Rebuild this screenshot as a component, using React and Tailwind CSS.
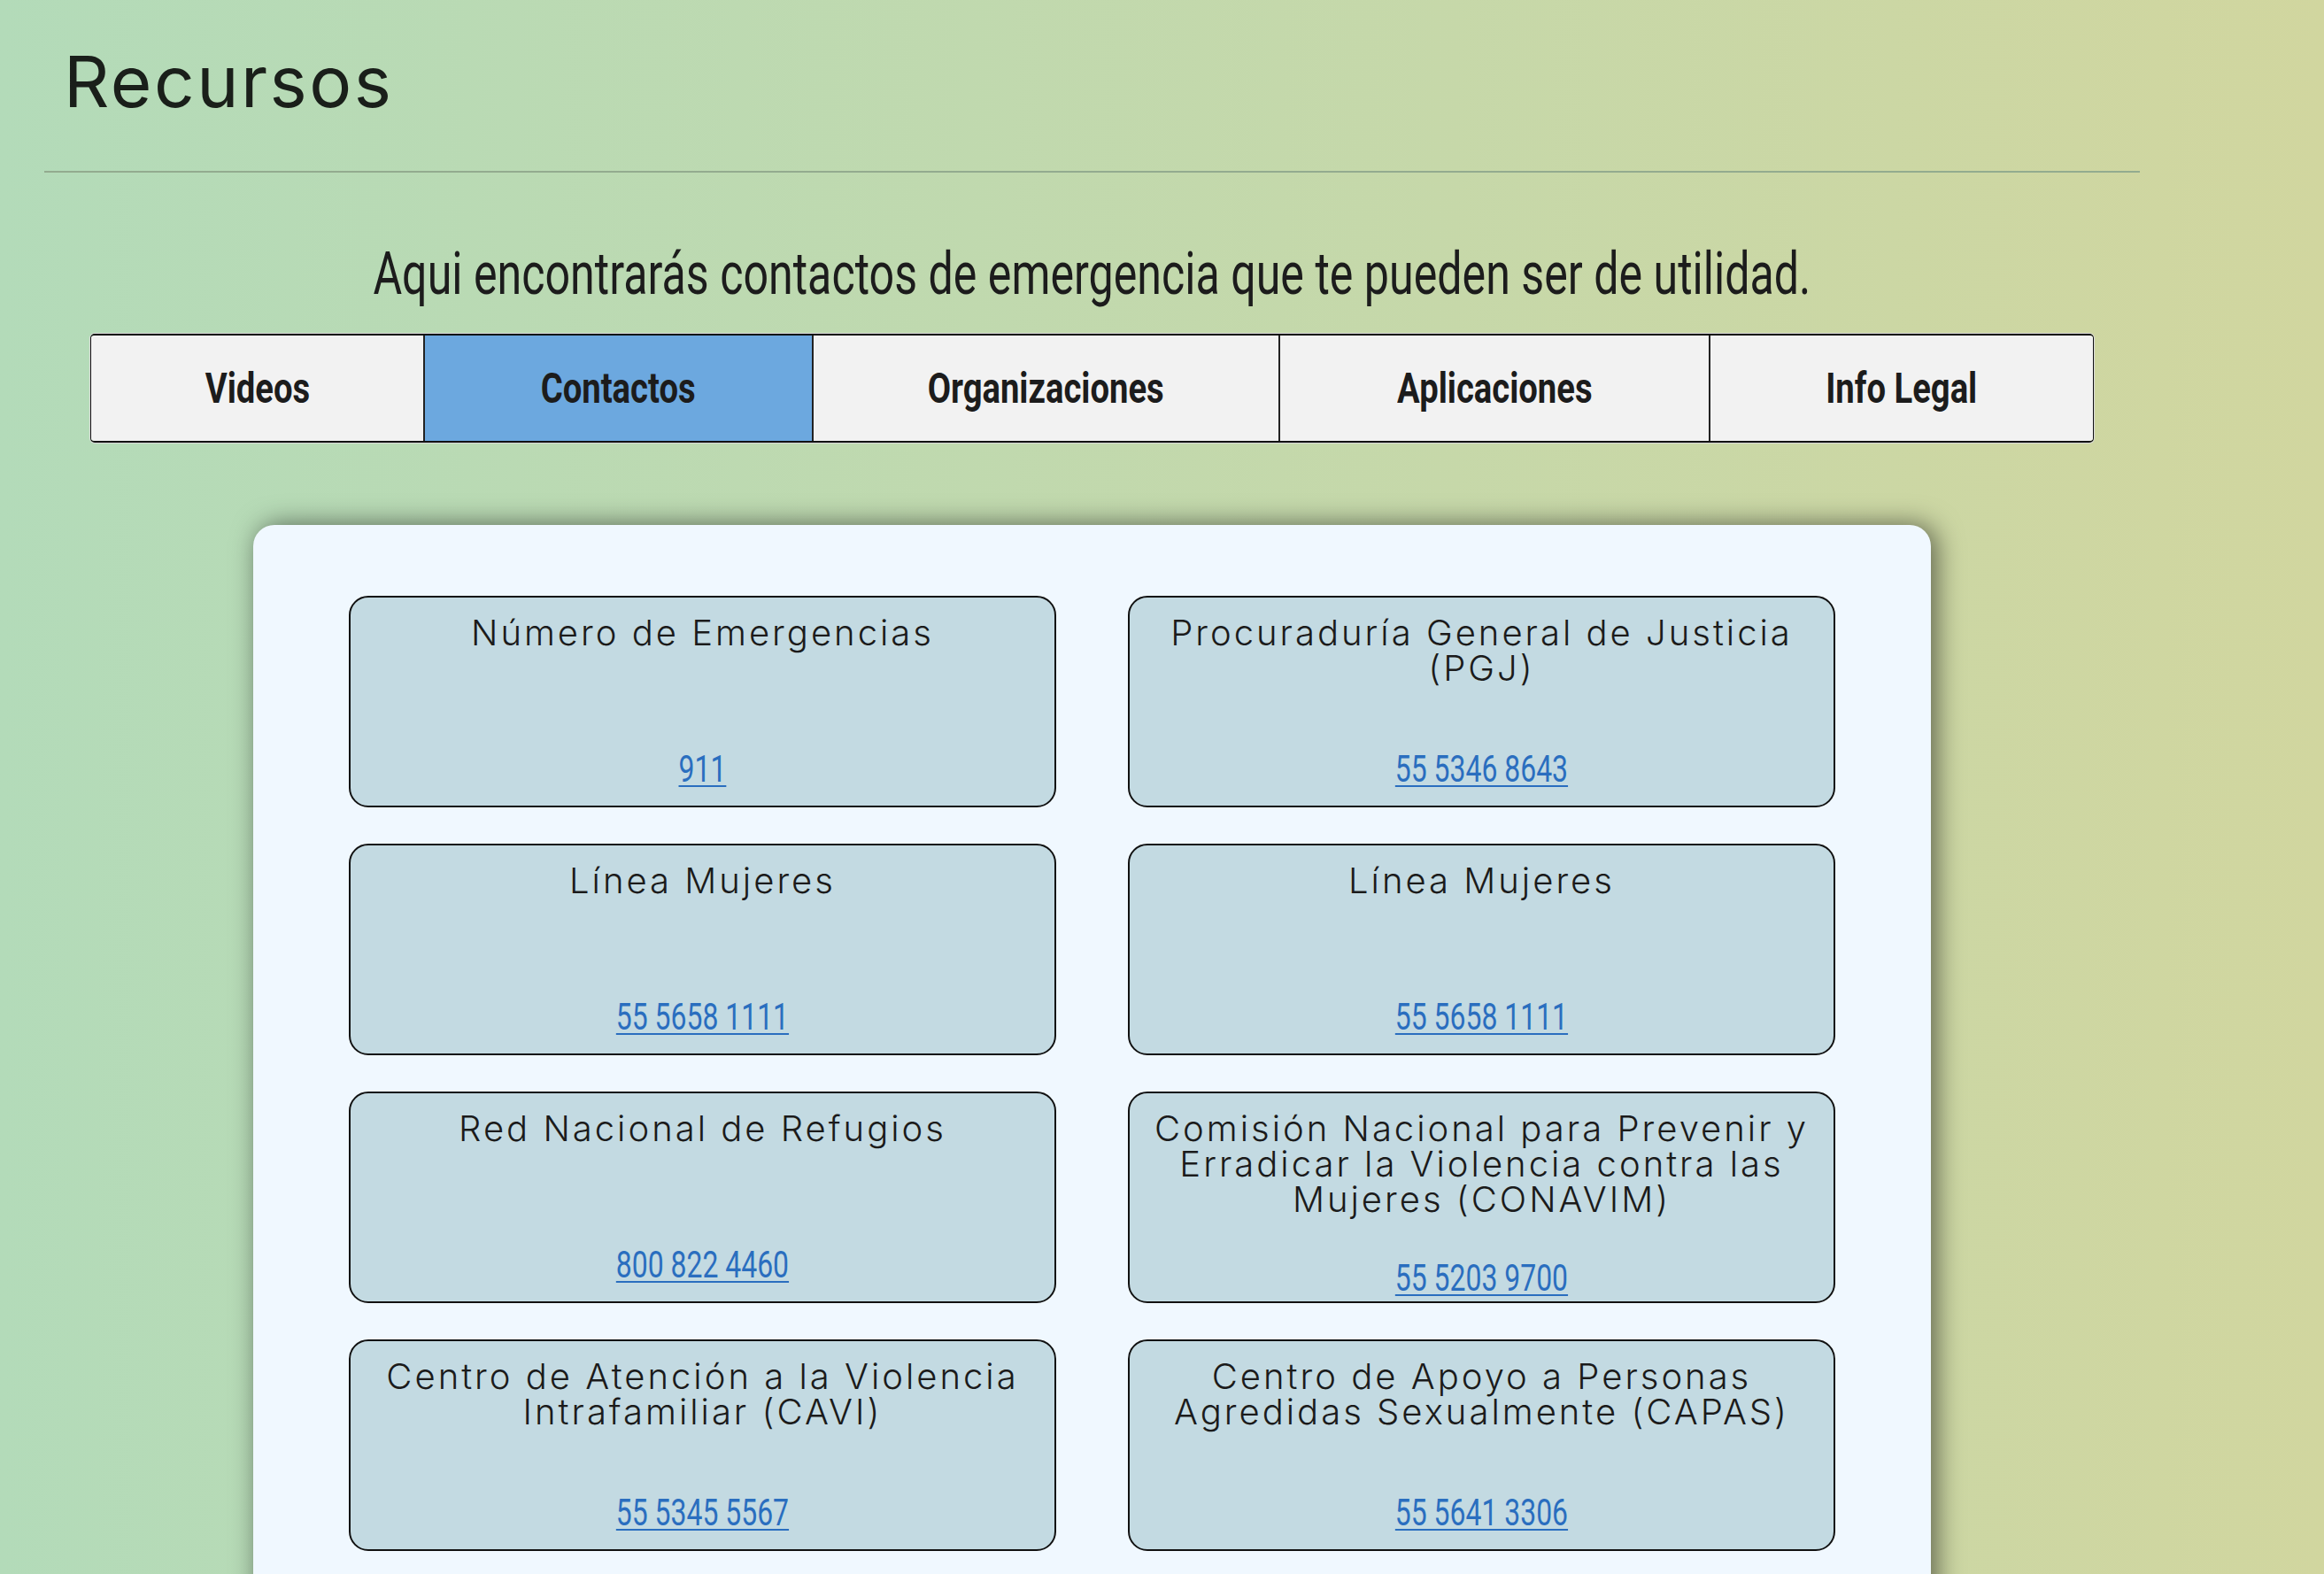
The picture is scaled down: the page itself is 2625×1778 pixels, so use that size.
import React from 'react';

// no Oswald offline: Roboto squeezed on the x axis stands in for it
const condensed = "font-['Roboto','Liberation_Sans',sans-serif]";
const wide = "font-['Inter','Noto_Sans',sans-serif]";

const tabs = [
  { label: 'Videos', w: 'w-[375px]' },
  { label: 'Contactos', w: 'w-[439px]' },
  { label: 'Organizaciones', w: 'w-[527px]' },
  { label: 'Aplicaciones', w: 'w-[486px]' },
  { label: 'Info Legal', w: 'flex-1' },
];

// lines are broken by hand so the wrap matches the reference
const contacts = [
  { name: ['Número de Emergencias'], phone: '911' },
  { name: ['Procuraduría General de Justicia', '(PGJ)'], phone: '55 5346 8643' },
  { name: ['Línea Mujeres'], phone: '55 5658 1111' },
  { name: ['Línea Mujeres'], phone: '55 5658 1111' },
  { name: ['Red Nacional de Refugios'], phone: '800 822 4460' },
  {
    name: ['Comisión Nacional para Prevenir y', 'Erradicar la Violencia contra las', 'Mujeres (CONAVIM)'],
    phone: '55 5203 9700',
  },
  { name: ['Centro de Atención a la Violencia', 'Intrafamiliar (CAVI)'], phone: '55 5345 5567' },
  { name: ['Centro de Apoyo a Personas', 'Agredidas Sexualmente (CAPAS)'], phone: '55 5641 3306' },
];

const ContactCard = ({ name, phone }) => (
  <div className="h-[239px] flex flex-col justify-between rounded-[22px] border-2 border-[#111] bg-[#c3dae2] pt-[20px] pb-[18px] text-center">
    <h3 className={`${wide} mb-[45px] text-[40px] leading-[40px] font-light tracking-[3px] text-[#1b1b1b] whitespace-nowrap`}>
      {name.map((line, i) => (
        <span key={i} className="block">
          {line}
        </span>
      ))}
    </h3>
    <p className={`${condensed} text-[42px] leading-[47px]`}>
      <a
        href={`tel:${phone.replace(/ /g, '')}`}
        className="inline-block scale-x-[0.76] text-[#2a6ebf] underline underline-offset-[4px] decoration-2"
      >
        {phone}
      </a>
    </p>
  </div>
);

export default function App() {
  const active = 'Contactos';

  return (
    <div className="min-h-screen bg-gradient-to-r from-[#b3dbb9] to-[#d1d69f] overflow-hidden">
      <div className="w-[2367px] ml-[50px]">
        <h1 className={`${wide} pt-[52px] pl-[22px] text-[80px] leading-[80px] font-normal tracking-[2.5px] text-[#1a1f1a]`}>
          Recursos
        </h1>
        <hr className="mt-[61px] border-0 h-[2px] bg-[#93ab8f]" />

        <p className={`${condensed} mt-[80px] text-center text-[66px] leading-[70px] text-[#1c1c1c]`}>
          <span className="inline-block whitespace-nowrap scale-x-[0.76]">
            Aqui encontrarás contactos de emergencia que te pueden ser de utilidad.
          </span>
        </p>

        <nav className="mt-[32px] mx-auto w-[2263px] h-[123px] flex rounded-[5px] border-y-2 border-x border-[#111] ring-1 ring-[#d8d8d8] overflow-hidden">
          {tabs.map((tab, i) => (
            <button
              key={tab.label}
              type="button"
              className={`${tab.w} shrink-0 flex items-center justify-center ${condensed} font-bold text-[49px] text-[#1c1c1c] ${
                i > 0 ? 'border-l-2 border-[#222]' : ''
              } ${tab.label === active ? 'bg-[#6ca8df]' : 'bg-[#f2f2f2]'}`}
            >
              <span className="inline-block whitespace-nowrap scale-x-[0.78]">{tab.label}</span>
            </button>
          ))}
        </nav>

        <section className="mt-[93px] mx-auto w-[1895px] rounded-t-[24px] bg-[#f0f8ff] px-[108px] pt-[80px] pb-[80px] shadow-[6px_0_30px_rgba(0,0,0,0.55)]">
          <div className="grid grid-cols-2 gap-x-[81px] gap-y-[41px]">
            {contacts.map((c, i) => (
              <ContactCard key={i} name={c.name} phone={c.phone} />
            ))}
          </div>
        </section>
      </div>
    </div>
  );
}
